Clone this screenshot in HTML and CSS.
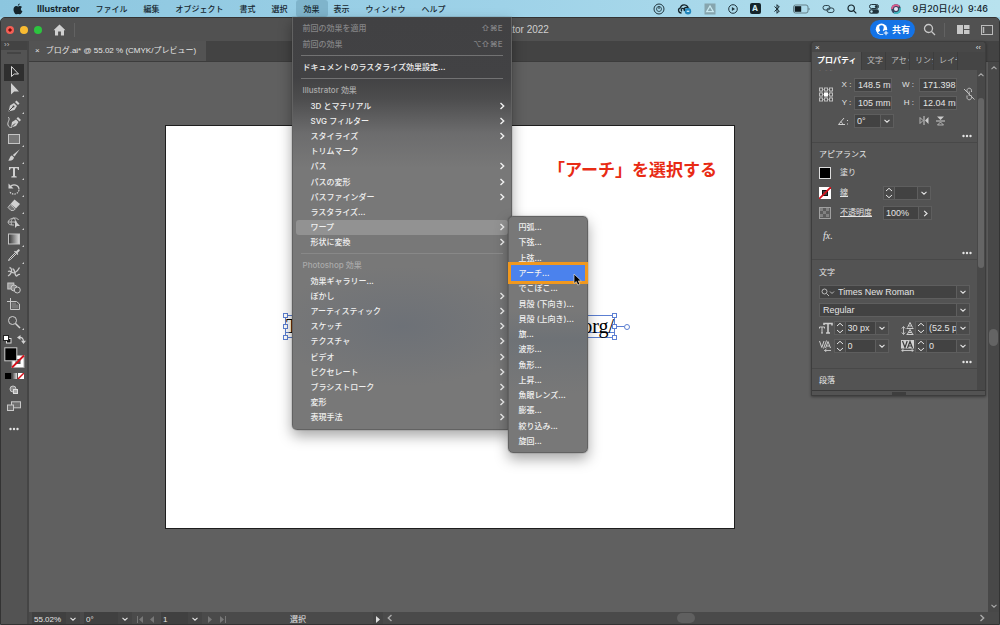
FILE: index.html
```html
<!DOCTYPE html>
<html lang="ja">
<head>
<meta charset="utf-8">
<title>Adobe Illustrator 2022</title>
<link rel="stylesheet" href="styles.css">
</head>
<body>
<svg class="defs" aria-hidden="true">
  <symbol id="down" viewBox="0 0 8 8"><path d="M1.5 2.8 4 5.2 6.500 2.8" fill="none" stroke="currentColor" stroke-width="1.100"/></symbol>
  <symbol id="right" viewBox="0 0 8 8"><path d="M2.500 1 5.700 4 2.500 7" fill="none" stroke="currentColor" stroke-width="1.400"/></symbol>
  <symbol id="step" viewBox="0 0 8 12"><path d="M1 4 4 1.300 7 4M1 8 4 10.700 7 8" fill="none" stroke="currentColor"/></symbol>
  <symbol id="more" viewBox="0 0 10 4"><circle cx="1.500" cy="2" r="1.200" fill="currentColor"/><circle cx="5" cy="2" r="1.200" fill="currentColor"/><circle cx="8.500" cy="2" r="1.200" fill="currentColor"/></symbol>
</svg>

<header class="menubar">
  <nav class="menubar-menus">
    <button class="apple" aria-label="Apple"><svg width="10" height="12" viewBox="0 0 10 12"><path fill="#15242b" d="M6.700.5C6.800 1.600 5.900 2.700 4.900 2.700 4.800 1.700 5.700.700 6.700.5ZM5.100 3.400C5.600 3.400 6.100 2.900 7 2.900 7.700 2.900 8.500 3.300 9 4 7.200 5.100 7.500 7.500 9.400 8.200 8.900 9.500 7.900 11.300 6.900 11.300 6.200 11.300 6 10.900 5.100 10.900 4.200 10.900 4 11.300 3.300 11.300 2.100 11.300.500 8.900.500 6.500.500 4.200 1.900 3 3.200 3 4 3 4.600 3.400 5.100 3.400Z"/></svg></button>
    <button class="app-name">Illustrator</button>
    <button>ファイル</button>
    <button>編集</button>
    <button>オブジェクト</button>
    <button>書式</button>
    <button>選択</button>
    <div class="open-menu">
      <button class="active" aria-expanded="true">効果</button>
      <div class="menu effect-menu">
        <button class="item top off">前回の効果を適用<span class="keys">⇧⌘E</span></button>
        <button class="item top off">前回の効果<span class="keys">⌥⇧⌘E</span></button>
        <hr>
        <button class="item top">ドキュメントのラスタライズ効果設定...</button>
        <hr>
        <div class="item top head">Illustrator 効果</div>
        <div class="group">
          <button class="item">3D とマテリアル<svg class="arrow"><use href="#right"/></svg></button>
          <button class="item">SVG フィルター<svg class="arrow"><use href="#right"/></svg></button>
          <button class="item">スタイライズ<svg class="arrow"><use href="#right"/></svg></button>
          <button class="item">トリムマーク</button>
          <button class="item">パス<svg class="arrow"><use href="#right"/></svg></button>
          <button class="item">パスの変形<svg class="arrow"><use href="#right"/></svg></button>
          <button class="item">パスファインダー<svg class="arrow"><use href="#right"/></svg></button>
          <button class="item">ラスタライズ...</button>
          <div class="has-sub">
            <button class="item lit" aria-expanded="true">ワープ<svg class="arrow"><use href="#right"/></svg></button>
            <div class="menu submenu">
              <div class="group">
                <button class="item">円弧...</button>
                <button class="item">下弦...</button>
                <button class="item">上弦...</button>
                <button class="item chosen">アーチ...</button>
                <button class="item">でこぼこ...</button>
                <button class="item">貝殻 (下向き)...</button>
                <button class="item">貝殻 (上向き)...</button>
                <button class="item">旗...</button>
                <button class="item">波形...</button>
                <button class="item">魚形...</button>
                <button class="item">上昇...</button>
                <button class="item">魚眼レンズ...</button>
                <button class="item">膨張...</button>
                <button class="item">絞り込み...</button>
                <button class="item">旋回...</button>
              </div>
              <svg class="pointer" width="9" height="13" viewBox="0 0 9 13"><path d="M1 1V10.500L3.300 8.500 4.800 12 6.800 11.200 5.300 7.900H8.300Z" fill="#000" stroke="#ddd" stroke-width=".7"/></svg>
            </div>
          </div>
          <button class="item">形状に変換<svg class="arrow"><use href="#right"/></svg></button>
        </div>
        <hr>
        <div class="item top head">Photoshop 効果</div>
        <div class="group">
          <button class="item">効果ギャラリー...</button>
          <button class="item">ぼかし<svg class="arrow"><use href="#right"/></svg></button>
          <button class="item">アーティスティック<svg class="arrow"><use href="#right"/></svg></button>
          <button class="item">スケッチ<svg class="arrow"><use href="#right"/></svg></button>
          <button class="item">テクスチャ<svg class="arrow"><use href="#right"/></svg></button>
          <button class="item">ビデオ<svg class="arrow"><use href="#right"/></svg></button>
          <button class="item">ピクセレート<svg class="arrow"><use href="#right"/></svg></button>
          <button class="item">ブラシストローク<svg class="arrow"><use href="#right"/></svg></button>
          <button class="item">変形<svg class="arrow"><use href="#right"/></svg></button>
          <button class="item">表現手法<svg class="arrow"><use href="#right"/></svg></button>
        </div>
      </div>
    </div>
    <button>表示</button>
    <button>ウィンドウ</button>
    <button>ヘルプ</button>
  </nav>
  <div class="menubar-status">
    <svg width="12" height="12" viewBox="0 0 12 12" fill="none" stroke="#20343c"><circle cx="6" cy="6" r="5"/><circle cx="6" cy="6" r="2.500" stroke-width=".8"/><path d="M6 3V6"/></svg>
    <svg width="15" height="12" viewBox="0 0 15 12" fill="none" stroke="#15252c" stroke-width="1.300"><path d="M4.500 10C1 10 .5 5.500 3.500 4.800 4 1.200 9.500.800 11 4M5 8.300C3 6.500 5.500 4.200 7.200 6L9 8.500M7.500 8C6 5 9.500 3 12 5.500"/><circle cx="11" cy="8.300" r="3.200" fill="#2387bd" stroke="none"/><path d="M9.700 8.300H12.300" stroke="#d9effa"/></svg>
    <svg width="12" height="12" viewBox="0 0 12 12"><rect x=".5" y=".5" width="11" height="11" fill="#86a5ae"/><path d="M6 3 9.300 8.700H2.700Z" fill="none" stroke="#c8e8f0" stroke-width="1.300"/></svg>
    <svg width="10" height="10" viewBox="0 0 10 10"><circle cx="5" cy="5" r="4.300" fill="none" stroke="#20343c"/><path d="M3.900 3 7 5 3.900 7Z" fill="#20343c"/></svg>
    <span class="ime">A</span>
    <svg width="8" height="12" viewBox="0 0 8 12"><path d="M1.500 3.500 6.300 8 4 10.300V1.700L6.300 4 1.500 8.500" fill="none" stroke="#15252c"/></svg>
    <svg width="17" height="10" viewBox="0 0 17 10"><rect x=".5" y="1" width="14.500" height="8" rx="2" fill="none" stroke="#648089"/><rect x="1.700" y="2.200" width="6.500" height="5.600" fill="#111c21"/><path d="M16 4V6" stroke="#648089"/></svg>
    <svg width="13" height="10" viewBox="0 0 13 10" fill="none" stroke="#2a414a"><rect x="1" y="1.500" width="7" height="4.500" rx="2.200"/><rect x="5" y="4" width="7" height="4.500" rx="2.200"/></svg>
    <svg width="10" height="10" viewBox="0 0 10 10" fill="none" stroke="#15252c" stroke-width="1.200"><circle cx="4.200" cy="4.200" r="3.200"/><path d="M6.600 6.600 9.300 9.300"/></svg>
    <svg width="10" height="10" viewBox="0 0 10 10"><rect x=".5" y=".5" width="9" height="4" rx="2" fill="none" stroke="#20343c"/><circle cx="7.300" cy="2.500" r="1.500" fill="#20343c"/><rect y="5.300" width="10" height="4.500" rx="2.200" fill="#20343c"/><circle cx="2.500" cy="7.500" r="1.200" fill="#b7e1ed"/></svg>
    <svg width="10" height="10" viewBox="0 0 10 10"><circle cx="5" cy="5" r="4.800" fill="#3a4660"/><path d="M1 5A4 4 0 0 1 8 2.500" stroke="#de5b8e" stroke-width="1.800" fill="none"/><path d="M9 4A4 4 0 0 1 3 8.500" stroke="#40b8bf" stroke-width="1.800" fill="none"/><circle cx="5" cy="5" r="2" fill="#e8e9f7"/></svg>
    <time>9月20日(火)&nbsp; 9:46</time>
  </div>
</header>

<div class="window">
  <header class="titlebar">
    <div class="title-left">
      <button class="light red" aria-label="閉じる"></button>
      <button class="light yellow" aria-label="しまう"></button>
      <button class="light green" aria-label="拡大"></button>
      <button class="home" aria-label="ホーム"><svg width="13" height="12" viewBox="0 0 13 12"><path d="M6.500.5 12.500 6.300H11V11.500H7.900V7.500H5.100V11.500H2V6.300H.500Z" fill="#d0d0d0"/></svg></button>
      <i class="rule"></i>
    </div>
    <h1>Adobe Illustrator 2022</h1>
    <div class="title-right">
      <button class="share"><svg width="14" height="13" viewBox="0 0 14 13"><circle cx="6.500" cy="6.200" r="5.700" fill="#fff"/><path d="M6.500 2.200C8.300 2.200 9 3.500 8.700 5 8.500 6.300 8 6.800 7.800 7.400 8 8.300 9.800 8.200 9.900 9.600 8 11.800 5 11.800 3.100 9.600 3.200 8.200 5 8.300 5.200 7.400 5 6.800 4.500 6.300 4.300 5 4 3.500 4.700 2.200 6.500 2.200Z" fill="#1473e6"/><circle cx="11" cy="10" r="3" fill="#1473e6"/><path d="M8.800 10H13.200M11 7.800V12.200" stroke="#fff"/></svg>共有</button>
      <button aria-label="検索"><svg width="13" height="13" viewBox="0 0 13 13" fill="none" stroke="#c8c8c8" stroke-width="1.300"><circle cx="5.500" cy="5.500" r="4"/><path d="M8.500 8.500 12 12"/></svg></button>
      <i class="rule"></i>
      <button class="arrange" aria-label="配列"><svg width="13" height="9" viewBox="0 0 13 9" fill="#c8c8c8"><path d="M0 0H6V9H0ZM7 0H12.500V4H7ZM7 5H12.500V9H7Z"/></svg></button>
      <button aria-label="ワークスペース"><svg width="12" height="10" viewBox="0 0 12 10"><rect x=".5" y=".5" width="11" height="9" fill="none" stroke="#bbb"/><path d="M2.500 2V8" stroke="#bbb" stroke-width="1.500"/></svg></button>
    </div>
  </header>

  <div class="workspace">
    <aside class="toolbox">
      <div class="tool-head">››</div>
      <i class="grip"></i>
      <div class="tools">
        <button class="on" aria-label="選択"><svg viewBox="0 0 14 14"><path d="M4.500 1.500V11.500L7.200 9H11.500Z" fill="none" stroke="#d8d8d8"/></svg></button>
        <button class="fly" aria-label="ダイレクト選択"><svg viewBox="0 0 14 14"><path d="M4 1V12.500L7.200 9.500H12Z" fill="#d0d0d0"/></svg></button>
        <button class="fly" aria-label="ペン"><svg viewBox="0 0 14 14"><path d="M1.500 12.500 3 6.500 7 4 10 7 7.500 11Z" fill="#d0d0d0"/><path d="M8 3 9.500 1.500 12.500 4.500 11 6Z" fill="#d0d0d0"/><path d="M2 12 6 8" stroke="#444"/><circle cx="6.500" cy="7.500" r="1" fill="#444"/></svg></button>
        <button aria-label="曲線"><svg viewBox="0 0 14 14"><path d="M4 12.500 5 7 9 4.500 11.500 7 9 11Z" fill="#d0d0d0"/><path d="M9.500 3.500 11 2 14 5 12.500 6.500Z" fill="#d0d0d0"/><path d="M4.500 12 8 8.500" stroke="#444"/><path d="M1 2C4 4 0 7 1 10 1.500 12 3.500 13 5 12" fill="none" stroke="#d0d0d0"/></svg></button>
        <button class="fly" aria-label="長方形"><svg viewBox="0 0 14 14"><rect x="1.500" y="2.500" width="11" height="9" fill="#777" stroke="#c4c4c4"/></svg></button>
        <button class="fly" aria-label="ブラシ"><svg viewBox="0 0 14 14" fill="#d0d0d0"><path d="M12.800 1.200 7.500 8.500 5.800 7Z"/><path d="M5 7.500 7 9.500C6.500 12.500 3.500 13 1 12.500 3 11.500 2.500 8 5 7.500Z"/></svg></button>
        <button class="fly" aria-label="文字"><svg viewBox="0 0 14 14"><path d="M2 2H12V5H11L10.300 3.300H8V11L9.700 11.500V12.500H4.300V11.500L6 11V3.300H3.700L3 5H2Z" fill="#d0d0d0"/></svg></button>
        <button class="fly" aria-label="回転"><svg viewBox="0 0 14 14" fill="none" stroke="#d0d0d0" stroke-width="1.200"><path d="M3 5C6 1 12 3 12 7.500"/><path d="M12 8C11 13 4 13.500 2.500 9" stroke-dasharray="1.500 1"/><path d="M1.500 1.500V6.500H6.500Z" fill="#d0d0d0" stroke="none"/></svg></button>
        <button class="fly" aria-label="消しゴム"><svg viewBox="0 0 14 14"><path d="M7.500 1.500 13 6 9 10.500 3.500 6Z" fill="#d0d0d0"/><path d="M3.200 6.500 8.300 11 6.500 12.500H4L1 9.500Z" fill="#777" stroke="#d0d0d0" stroke-width=".8"/></svg></button>
        <button class="fly" aria-label="シェイプ形成"><svg viewBox="0 0 14 14"><path d="M7 10C3 10.500 0 8.500 1.500 6 3 3 10 1.500 11.500 5M5 10C3 7 5 3 7 3M8 8C9 6 8 4 7 3M1 7H10" fill="none" stroke="#c8c8c8" stroke-width=".9"/><path d="M8 5.500V13L10 11H13Z" fill="#d0d0d0"/></svg></button>
        <button class="fly" aria-label="グラデーション"><svg viewBox="0 0 14 14"><defs><linearGradient id="g"><stop stop-color="#333"/><stop offset="1" stop-color="#ddd"/></linearGradient></defs><rect x="1.500" y="2" width="11" height="10" fill="url(#g)" stroke="#c4c4c4"/></svg></button>
        <button class="fly" aria-label="スポイト"><svg viewBox="0 0 14 14"><path d="M8 5 2.500 10.500 1.500 12.500 3.500 11.500 9 6" fill="none" stroke="#d0d0d0"/><path d="M7 3.500 8 2.700 9 3.500 11 1.500C12 .5 13.500 2 12.500 3L10.500 5 11.300 6 10.500 7Z" fill="#d0d0d0"/></svg></button>
        <button aria-label="線幅"><svg viewBox="0 0 14 14" fill="none" stroke="#c8c8c8" stroke-width="1.300"><path d="M2.500 2.500C5 3 5 6 4 8 3 10 2 10.500 1 11"/><path d="M1 6.500C4 5 5 9 8 7.500 9.500 6.800 11 5.500 12.500 2.500"/><path d="M5.500 4C8.500 3.500 7 10.500 9.500 11 11 11.200 10.500 8.500 13 9.500"/></svg></button>
        <button aria-label="ブレンド"><svg viewBox="0 0 14 14" stroke="#c8c8c8"><rect x=".8" y="2" width="6" height="6" fill="#999"/><circle cx="7" cy="7" r="3" fill="#888"/><circle cx="10.300" cy="9" r="3" fill="#535353"/></svg></button>
        <button aria-label="アートボード"><svg viewBox="0 0 14 14" fill="none" stroke="#c8c8c8"><path d="M3.500 0V11.500H12.500V6L9.500 3.500H0"/><path d="M4.500 4.500H9V6.500H11.500V10.500H4.500Z" fill="#777" stroke="none"/></svg></button>
        <button class="fly" aria-label="ズーム"><svg viewBox="0 0 14 14" fill="none" stroke="#d0d0d0"><circle cx="5.500" cy="5.500" r="4"/><path d="M8.500 8.500 13 13" stroke-width="1.500"/></svg></button>
      </div>
      <div class="swap">
        <svg width="9" height="9" viewBox="0 0 9 9"><rect x="3.500" y="3.500" width="4.500" height="4.500" fill="#111" stroke="#ddd"/><rect x=".5" y=".5" width="5" height="5" fill="#fff" stroke="#222"/></svg>
        <svg width="9" height="9" viewBox="0 0 9 9"><path d="M2 2.500C5 2 6.500 3.500 6.500 7" fill="none" stroke="#d0d0d0" stroke-width="1.200"/><path d="M3.500 0V5L0 2.500ZM4 5.800H9L6.500 9Z" fill="#d0d0d0"/></svg>
      </div>
      <svg class="paint" width="21" height="22" viewBox="0 0 21 22"><rect x="8" y="8.500" width="12" height="12" fill="#fff" stroke="#aaa"/><rect x="11.500" y="12" width="5" height="5" fill="#555"/><path d="M8 20.500 20 8.500" stroke="#d5121b" stroke-width="1.800"/><rect x=".8" y=".8" width="12" height="13" fill="#000" stroke="#ccc"/></svg>
      <svg width="19" height="6" viewBox="0 0 19 6"><path d="M0 0H6V6H0Z" fill="#000"/><path d="M6.500 0H12V6H6.500Z" fill="url(#g)"/><path d="M13 0H19V6H13Z" fill="#fff"/><path d="M13 6 19 0" stroke="#d5121b" stroke-width="1.500"/></svg>
      <svg width="10" height="10" viewBox="0 0 10 10"><circle cx="4" cy="4" r="3" fill="#888" stroke="#c8c8c8"/><rect x="4.500" y="4.500" width="4" height="4" fill="#aaa" stroke="#ddd"/></svg>
      <svg width="14" height="11" viewBox="0 0 14 11" fill="#707070" stroke="#c8c8c8"><rect x="4.500" y=".8" width="9" height="6"/><rect x=".5" y="4" width="6" height="5.500"/></svg>
      <svg class="tool-more" width="10" height="4"><use href="#more"/></svg>
    </aside>

    <main class="document">
      <div class="tabs"><div class="tab"><button aria-label="閉じる">×</button><span>ブログ.ai* @ 55.02 % (CMYK/プレビュー)</span></div></div>
      <div class="view">
        <div class="canvas">
          <div class="artboard">
            <p class="note">「アーチ」を選択する</p>
            <div class="frame"><span>T</span><span>org/</span>
              <i class="h tl"></i><i class="h tr"></i><i class="h ml"></i><i class="h mr"></i><i class="h bl"></i><i class="h br"></i><i class="port"></i>
            </div>
          </div>
        </div>
        <div class="vscroll"><svg width="8" height="8"><use href="#down"/></svg><i></i><svg width="8" height="8"><use href="#down"/></svg></div>
      </div>
      <footer class="status">
        <input class="zoom" aria-label="ズーム" value="55.02%"><button aria-label="ズーム一覧"><svg width="8" height="8"><use href="#down"/></svg></button>
        <input class="turn" aria-label="回転" value="0°"><button aria-label="回転一覧"><svg width="8" height="8"><use href="#down"/></svg></button>
        <div class="pager dim"><svg width="7" height="7" viewBox="0 0 7 7"><path d="M0 0H1V7H0ZM6 0V7L2 3.500Z"/></svg><svg width="7" height="7" viewBox="0 0 7 7"><path d="M5 0V7L1 3.500Z"/></svg></div>
        <input class="page" aria-label="アートボード番号" value="1"><button aria-label="アートボード一覧"><svg width="8" height="8"><use href="#down"/></svg></button>
        <div class="pager dim"><svg width="7" height="7" viewBox="0 0 7 7"><path d="M1 0V7L5 3.500Z"/></svg><svg width="7" height="7" viewBox="0 0 7 7"><path d="M6 0H7V7H6ZM1 0V7L5 3.500Z"/></svg></div>
        <span class="mode">選択</span>
        <button class="play" aria-label="メニュー"><svg width="7" height="7" viewBox="0 0 7 7"><path d="M1 0V7L5 3.500Z"/></svg></button>
        <div class="hscroll"><svg class="flip" width="8" height="8"><use href="#right"/></svg><i></i><svg width="8" height="8"><use href="#right"/></svg></div>
      </footer>
    </main>

    <aside class="panel">
      <div class="panel-top"><button aria-label="閉じる">×</button><button aria-label="折りたたむ">‹‹</button></div>
      <div class="panel-tabs"><button class="current">プロパティ</button><button>文字</button><button>アセット</button><button>リンク</button><button>レイヤー</button></div>
      <div class="panel-body">
        <div class="sections">
          <section class="transform">
            <h2 class="cut">変形</h2>
            <div class="xywh">
              <svg class="ref" width="14" height="15" viewBox="0 0 14 15" fill="none" stroke="#bdbdbd"><path d="M2 2.500H12M2 7.500H12M2 12.500H12M2 2.500V12.500M7 2.500V12.500M12 2.500V12.500" stroke-width=".6"/><g fill="#535353"><rect x=".5" y="1" width="3" height="3"/><rect x="5.500" y="1" width="3" height="3"/><rect x="10.500" y="1" width="3" height="3"/><rect x=".5" y="6" width="3" height="3"/><rect x="10.500" y="6" width="3" height="3"/><rect x=".5" y="11" width="3" height="3"/><rect x="5.500" y="11" width="3" height="3"/><rect x="10.500" y="11" width="3" height="3"/></g><rect x="5.500" y="6" width="3" height="3" fill="#fff" stroke="#fff"/></svg>
              <label for="x">X :</label><input id="x" value="148.5 mm"><label for="w">W :</label><input id="w" value="171.398">
              <label for="y">Y :</label><input id="y" value="105 mm"><label for="hh">H :</label><input id="hh" value="12.04 mm">
              <svg class="link" width="12" height="14" viewBox="0 0 12 14" fill="none" stroke="#c0c0c0"><path d="M4 5V3.500C4 .5 8.500.500 8.500 3.500V5M4 8.500V10.500C4 13.500 8.500 13.500 8.500 10.500V8.500M6.200 4.500V9M1 2 11.500 12.500"/></svg>
              <label for="a"><svg width="12" height="9" viewBox="0 0 12 9"><path d="M7 1 1.500 7.500H8M3.500 5C5 5 5.500 6 5.500 7.500" fill="none" stroke="#d0d0d0"/><path d="M10 3H11V4H10ZM10 6.500H11V7.500H10Z" fill="#d0d0d0"/></svg></label>
              <div class="combo"><input id="a" value="0°"><button aria-label="角度一覧"><svg width="8" height="8"><use href="#down"/></svg></button></div>
              <div class="flips"><svg width="10" height="9" viewBox="0 0 10 9"><path d="M1 1.500V7.500L4 4.500Z" fill="none" stroke="#ccc" stroke-width=".8"/><path d="M5 0V9" stroke="#ccc"/><path d="M9.500 1V8L6 4.500Z" fill="#ccc"/></svg><svg width="9" height="10" viewBox="0 0 9 10"><path d="M1 .5H8L4.500 4Z" fill="#ccc"/><path d="M0 5H9" stroke="#ccc"/><path d="M1.500 9H7.500L4.500 6Z" fill="none" stroke="#ccc" stroke-width=".8"/></svg></div>
            </div>
            <button class="more" aria-label="詳細"><svg width="10" height="4"><use href="#more"/></svg></button>
          </section>
          <section class="looks">
            <h2>アピアランス</h2>
            <div class="look"><svg width="12" height="12" viewBox="0 0 12 12"><rect x=".5" y=".5" width="11" height="11" fill="#000" stroke="#ddd"/></svg><span>塗り</span></div>
            <div class="look"><svg width="12" height="12" viewBox="0 0 12 12"><rect width="12" height="12" fill="#fff"/><rect x="3.500" y="3.500" width="5" height="5" fill="#444" stroke="#111"/><path d="M0 12 12 0" stroke="#d5121b" stroke-width="1.800"/></svg><a href="#">線</a><div class="combo"><svg class="step"><use href="#step"/></svg><input class="w22" aria-label="線幅"><button aria-label="線幅一覧"><svg width="8" height="8"><use href="#down"/></svg></button></div></div>
            <div class="look"><svg width="12" height="12" viewBox="0 0 12 12"><rect x=".5" y=".5" width="11" height="11" fill="#5c5c5c" stroke="#a0a0a0"/><path d="M1 1H4V4H1ZM7 1H10V4H7ZM4 4H7V7H4ZM1 7H4V10H1ZM7 7H10V10H7Z" fill="#818181"/></svg><a href="#">不透明度</a><div class="combo"><input class="w34" aria-label="不透明度" value="100%"><button aria-label="スライダー"><svg width="7" height="7"><use href="#right"/></svg></button></div></div>
            <button class="fx">fx.</button>
            <button class="more" aria-label="詳細"><svg width="10" height="4"><use href="#more"/></svg></button>
          </section>
          <section class="chars">
            <h2>文字</h2>
            <div class="pick"><svg class="find" width="14" height="9" viewBox="0 0 14 9" fill="none" stroke="#bbb"><circle cx="3.500" cy="3.500" r="2.500"/><path d="M5.500 5.500 8 8M9 3.500 11 5.500 13 3.500"/></svg><select aria-label="フォント"><option>Times New Roman</option></select><svg class="caret"><use href="#down"/></svg></div>
            <div class="pick"><select aria-label="スタイル"><option>Regular</option></select><svg class="caret"><use href="#down"/></svg></div>
            <div class="quad">
              <div class="metric"><svg width="14" height="12" viewBox="0 0 14 12" fill="none" stroke="#ccc"><path d="M.5 6.500V5H5.500V6.500M3 5V11M2 11H4" /><path d="M5 3V1.500H13V3.500M9 1.500V11M7 11H11" stroke-width="1.600"/></svg><div class="combo"><svg class="step"><use href="#step"/></svg><input aria-label="サイズ" value="30 px"><button aria-label="サイズ一覧"><svg width="8" height="8"><use href="#down"/></svg></button></div></div>
              <div class="metric"><svg width="14" height="13" viewBox="0 0 14 13" fill="none" stroke="#ccc"><path d="M2.500 5V12M.8 6.500 2.500 4.500 4.200 6.500M.8 10.500 2.500 12.500 4.200 10.500" stroke-width=".9"/><path d="M6.500 5.500 9 .5 11.500 5.500M7.500 4H10.500M5.500 6.500H12.500M6.500 12 9 7.500 11.500 12M7.500 10.500H10.500M5.500 12.500H12.500"/></svg><div class="combo"><svg class="step"><use href="#step"/></svg><input aria-label="行送り" value="(52.5 px)"><button aria-label="行送り一覧"><svg width="8" height="8"><use href="#down"/></svg></button></div></div>
              <div class="metric"><svg width="14" height="12" viewBox="0 0 14 12" fill="none" stroke="#ccc"><path d="M.5 1 2.800 7.500 5 1M4.500 8.500 7.500.5M6.500 8 9 1.500 11.500 8M7.500 6H10.500"/><path d="M5.500 10.500H12M7.500 9 5.500 10.500 7.500 12" stroke-width=".9"/></svg><div class="combo"><svg class="step"><use href="#step"/></svg><input aria-label="カーニング" value="0"><button aria-label="カーニング一覧"><svg width="8" height="8"><use href="#down"/></svg></button></div></div>
              <div class="metric"><svg width="14" height="12" viewBox="0 0 14 12" fill="none"><rect x="0" y="0" width="13" height="8.500" fill="#d0d0d0"/><path d="M1.500 1 4 7.500 6.200 1M6.500 8 9 1.500 11.500 8M7.500 6H10.500" stroke="#3c3c3c" stroke-width="1.200"/><path d="M.5 10.500H12.500M2.500 9.200.8 10.500 2.500 12M10.500 9.200 12.200 10.500 10.500 12" stroke="#d0d0d0" stroke-width=".9"/></svg><div class="combo"><svg class="step"><use href="#step"/></svg><input aria-label="トラッキング" value="0"><button aria-label="トラッキング一覧"><svg width="8" height="8"><use href="#down"/></svg></button></div></div>
            </div>
            <button class="more" aria-label="詳細"><svg width="10" height="4"><use href="#more"/></svg></button>
          </section>
          <section><h2>段落</h2></section>
        </div>
        <div class="pscroll"><svg class="up" width="8" height="8"><use href="#down"/></svg><i></i></div>
      </div>
      <div class="panel-foot"><i></i></div>
    </aside>
  </div>
</div>
</body>
</html>
```

FILE: styles.css
```css
* { box-sizing: border-box; }
html, body { height: 100%; }
body {
  margin: 0;
  display: flex;
  flex-direction: column;
  overflow: hidden;
  background: #9dd1e6;
  color: #e4e4e4;
  font: 8px/12px "Liberation Sans", "Noto Sans CJK JP", sans-serif;
}
button, input, select { font: inherit; color: inherit; border: 0; padding: 0; margin: 0; background: none; border-radius: 0; min-width: 0; }
svg { display: block; flex: none; }
a { color: inherit; }
i { display: block; }
h1, h2, p { margin: 0; font-weight: 400; }
.defs { position: absolute; width: 0; height: 0; }

/* system menu bar */
.menubar {
  flex: none;
  height: 17px;
  display: flex;
  justify-content: space-between;
  background: linear-gradient(90deg, #8cc6df, #9ed2e8 50%, #b8e2ee);
  color: #16262e;
  font-family: Inter, "Noto Sans CJK JP", sans-serif;
  font-weight: 500;
}
.menubar-menus { display: flex; }
.menubar-menus > button, .open-menu > button { height: 17px; padding: 0 8px; white-space: nowrap; }
.menubar-menus > .apple { padding: 0 6px 0 13px; }
.menubar-menus > .app-name { font-weight: 700; font-size: 9px; }
.open-menu { position: relative; z-index: 10; margin-right: -2px; }
.open-menu > .active { background: #7fb4cb; border-radius: 3px; }
.menubar-status { display: flex; align-items: center; gap: 12px; padding-right: 12px; }
.menubar-status time { font-size: 9px; white-space: nowrap; }
.ime { width: 11px; height: 11px; line-height: 11px; border-radius: 2px; background: #15242b; color: #d3edf5; text-align: center; font-weight: 700; }

/* drop-down menus */
.menu {
  position: absolute;
  display: flex;
  flex-direction: column;
  border: 1px solid #626262;
  border-radius: 5px;
  box-shadow: 0 0 1px #222, 0 6px 14px rgba(0, 0, 0, .35);
  color: #f0f0f0;
}
.effect-menu {
  top: 17px;
  left: -4px;
  width: 220px;
  padding: 2px 3px 4px;
  border-top-color: #444;
  border-radius: 0 0 5px 5px;
  background:
    radial-gradient(ellipse 130px 60px at 50% 75%, #6d7177, transparent),
    linear-gradient(#414143, #424244 60px, #4c4c4d 80px, #6c6c6d 115px, #787878 150px, #787878);
}
.menu hr { width: 202px; height: 1px; margin: 3px auto; border: 0; background: #929292; opacity: .6; }
.item { display: flex; align-items: center; width: 100%; padding: 0 2px 0 15px; text-align: left; white-space: nowrap; border-radius: 3px; }
.item.top { height: 16px; padding: 0 5px 0 7px; }
.item.off { color: #858587; }
.item.head { color: #aaa; }
.keys { margin-left: auto; font-family: Inter, "DejaVu Sans", sans-serif; }
.arrow { width: 8px; height: 8px; margin-left: auto; }
.group { height: 152px; display: grid; grid-auto-rows: 1fr; }
.has-sub { position: relative; display: grid; }
.lit { background: #929292; }
.submenu {
  top: -4px;
  left: 212px;
  width: 80px;
  padding: 3px 2px;
  background: linear-gradient(#787878 40%, #6e7276 52%, #787878 75%);
}
.submenu .group { height: 229px; }
.submenu .item { padding-left: 8px; border-radius: 0; }
.submenu .chosen { background: #4b82ed; outline: 3px solid #f0981e; z-index: 1; }
.pointer { position: absolute; left: 64px; top: 56px; z-index: 2; }

/* application window */
.window { flex: 1; min-height: 0; display: flex; flex-direction: column; border: 1px solid #333; border-radius: 5px 5px 0 0; background: #535353; overflow: hidden; }
.titlebar { flex: none; height: 23px; display: grid; grid-template-columns: 1fr auto 1fr; align-items: center; background: #515151; }
.titlebar h1 { font-size: 10px; color: #cfcfcf; }
.title-left, .title-right { display: flex; align-items: center; gap: 6px; }
.title-left { padding-left: 5px; }
.light { width: 8px; height: 8px; border-radius: 50%; }
.red { background: radial-gradient(#7a0b08 25%, #f45f55 32%); }
.yellow { background: #f9bb32; }
.green { background: #2cc43f; }
.home { margin: 0 2px 0 5px; }
.rule { width: 1px; height: 14px; background: #626262; }
.title-right { justify-content: flex-end; padding-right: 6px; gap: 8px; }
.share { display: flex; align-items: center; gap: 3px; height: 19px; padding: 0 5px; border-radius: 10px; background: #1473e6; color: #fff; font-size: 9px; font-weight: 700; }
.arrange { margin: 0 3px 0 4px; }
.workspace { position: relative; flex: 1; min-height: 0; display: flex; }

/* tools */
.toolbox { flex: none; width: 28px; display: flex; flex-direction: column; align-items: center; background: #535353; border-right: 2px solid #454545; }
.tool-head { align-self: stretch; height: 9px; padding-left: 3px; background: #434343; color: #bbb; line-height: 8px; }
.grip { width: 14px; height: 2px; margin: 2px 0 10px; background: #444; }
.tools { height: 266px; width: 20px; display: grid; grid-auto-rows: 1fr; }
.tools button { position: relative; display: grid; place-items: center; }
.tools svg { width: 14px; height: 14px; }
.tools .on { background: #2f2f2f; }
.fly::after { content: ""; position: absolute; right: 0; bottom: 0; border: 1px solid; border-color: transparent #ccc #ccc transparent; }
.swap { display: flex; gap: 5px; margin: 5px 0 3px; }
.paint { margin-bottom: 4px; }
.toolbox > svg + svg { margin-bottom: 6px; }
.tool-more { margin-top: 9px; }

/* document area */
.document { flex: 1; min-width: 0; display: flex; flex-direction: column; }
.tabs { flex: none; height: 21px; display: flex; background: #434343; border-bottom: 1px solid #3c3c3c; }
.tab { display: flex; align-items: center; gap: 6px; padding: 0 10px 0 6px; background: #535353; white-space: nowrap; }
.view { flex: 1; min-height: 0; display: flex; }
.canvas { position: relative; flex: 1; background: #606060; overflow: hidden; }
.artboard { position: absolute; left: 136px; top: 63px; width: 570px; height: 404px; border: 1px solid #1e1e1e; background: #fff; }
.note { position: absolute; right: 17px; top: 32px; color: #e82b14; font-size: 17px; line-height: 25px; font-weight: 700; }
.frame { position: absolute; left: 119px; top: 189px; width: 330px; height: 23px; display: flex; justify-content: space-between; border: 1px solid #5c7fd2; color: #000; font: 20px/21px "Liberation Serif", serif; background: linear-gradient(#5c7fd2, #5c7fd2) 0 16px / 100% 1px no-repeat; }
.h { position: absolute; width: 5px; height: 5px; border: 1px solid #5c7fd2; background: #fff; }
.tl { left: -3px; top: -3px; } .tr { right: -3px; top: -3px; }
.ml { left: -3px; top: 8px; } .mr { right: -3px; top: 8px; }
.bl { left: -3px; bottom: -3px; } .br { right: -3px; bottom: -3px; }
.port { position: absolute; right: -16px; top: 8px; width: 6px; height: 6px; border: 1px solid #5c7fd2; border-radius: 50%; background: #fff; }
.port::before { content: ""; position: absolute; right: 5px; top: 1px; width: 8px; height: 1px; background: #5c7fd2; }
.vscroll { flex: none; width: 11px; display: flex; flex-direction: column; align-items: center; justify-content: space-between; padding: 2px 0; background: #484848; color: #aaa; }
.vscroll svg:first-child, .up { transform: rotate(180deg); }
.vscroll i { width: 9px; height: 17px; border-radius: 5px; background: #646464; }
.status { flex: none; height: 12px; display: flex; align-items: center; background: #4a4a4a; }
.status input { height: 12px; padding: 3px 2px 0; background: #404040; line-height: 9px; }
.status > button { width: 14px; height: 12px; display: grid; place-items: center; padding-top: 2px; background: #454545; }
.status .zoom { width: 34px; margin-left: 3px; }
.status .turn { width: 34px; margin-left: 4px; }
.status .page { width: 27px; }
.pager { width: 29px; display: flex; justify-content: space-evenly; padding-top: 2px; fill: #777; }
.mode { width: 142px; padding: 3px 8px 0 0; line-height: 9px; text-align: center; }
.status > .play { width: 10px; fill: #ddd; }
.hscroll { flex: 1; display: flex; align-items: center; justify-content: space-between; padding: 0 13px 0 3px; color: #aaa; }
.hscroll i { width: 18px; height: 10px; border-radius: 5px; background: #606060; }
.flip { transform: scaleX(-1); }

/* properties panel */
.panel { position: absolute; top: 0; right: 13px; width: 175px; display: flex; flex-direction: column; background: #535353; border: 1px solid #3d3d3d; border-radius: 4px 4px 0 0; box-shadow: 0 1px 3px rgba(0, 0, 0, .4); }
.panel-top { height: 10px; display: flex; justify-content: space-between; padding: 0 4px 0 3px; background: #484848; border-radius: 4px 4px 0 0; line-height: 9px; }
.panel-top button { line-height: 9px; }
.panel-tabs { height: 18px; display: flex; background: #454545; color: #bbb; }
.panel-tabs button { width: 24px; padding-left: 5px; overflow: hidden; white-space: nowrap; text-align: left; border-right: 1px solid #3d3d3d; }
.panel-tabs .current { width: 50px; background: #535353; color: #fff; font-weight: 700; }
.panel-body { display: flex; }
.sections { flex: 1; min-width: 0; overflow: hidden; }
section { display: flow-root; padding: 0 7px; border-bottom: 1px solid #484848; }
section h2 { font-size: 8px; line-height: 12px; }
section input, section select { background: #424242; font-size: 9px; height: 12px; }
.transform { height: 73px; }
.cut { margin-top: -9px; }
.xywh { display: grid; grid-template-columns: 20px 13px 41px 22px 39px 1fr; row-gap: 4px; column-gap: 1px; align-items: center; padding-top: 5px; }
.xywh > input { height: 14px; width: 38px; padding-left: 3px; border: 1px solid #5e5e5e; }
.xywh > label { justify-self: center; }
.ref { grid-row: 1 / 3; grid-column: 1; }
.link { grid-row: 1 / 3; grid-column: 6; justify-self: end; margin-right: -5px; }
.xywh > label[for="x"], .xywh > label[for="y"], .xywh > label[for="a"] { grid-column: 2; }
.xywh > label[for="a"] { justify-self: end; margin-right: 4px; }
.xywh > label[for="w"], .xywh > label[for="hh"] { justify-self: end; margin-right: 4px; }
.flips { grid-column: 5; display: flex; gap: 7px; }
.combo { display: inline-flex; justify-self: start; height: 14px; align-items: center; border: 1px solid #5e5e5e; background: #424242; }
.combo button { width: 13px; height: 12px; display: grid; place-items: center; border-left: 1px solid #5e5e5e; background: #4a4a4a; }
.combo input { width: 25px; padding-left: 2px; }
.combo .w22 { width: 22px; }
.combo .w34 { width: 34px; }
.step { width: 11px; height: 12px; background: #4a4a4a; border-right: 1px solid #5e5e5e; }
.more { display: block; margin: 6px -2px 0 auto; height: 4px; }
.looks { height: 117px; padding-top: 6px; }
.look { display: flex; align-items: center; height: 20px; gap: 9px; }
.looks h2 { margin-bottom: 2px; }
.look a, .look span { width: 34px; }
.fx { display: block; margin: 7px 0 0 4px; font: italic 10px/12px "Liberation Serif", serif; }
.looks .more { margin-top: 9px; }
.chars { height: 109px; padding-top: 7px; }
.chars h2 { margin-bottom: 6px; }
.pick { display: flex; align-items: center; height: 14px; margin-bottom: 4px; border: 1px solid #5e5e5e; background: #424242; }
.pick select { flex: 1; appearance: none; padding-left: 3px; }
.find { margin-left: 1px; }
.caret { width: 13px; height: 12px; padding: 2px; border-left: 1px solid #5e5e5e; background: #4a4a4a; }
.quad { display: grid; grid-template-columns: 1fr 1fr; gap: 4px 12px; }
.metric { display: flex; align-items: center; justify-content: space-between; height: 14px; }
.metric .combo input { width: 29px; }
.chars .more { margin-top: 7px; }
.sections section:last-child { height: 21px; padding-top: 6px; border: 0; }
.pscroll { flex: none; width: 8px; display: flex; flex-direction: column; align-items: center; padding-top: 1px; background: #484848; color: #aaa; }
.pscroll i { width: 6px; height: 170px; margin-top: 19px; border-radius: 3px; background: #656565; }
.panel-foot { height: 5px; display: grid; place-items: center; border-top: 1px solid #3a3a3a; }
.panel-foot i { width: 14px; height: 3px; background: #3e3e3e; }
```
